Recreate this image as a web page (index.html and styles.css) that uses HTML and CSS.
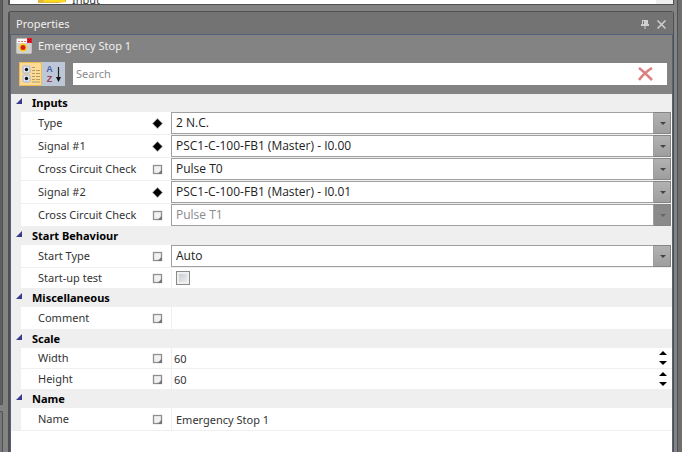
FILE: index.html
```html
<!DOCTYPE html>
<html lang="en">
<head>
    <meta charset="UTF-8">
    <meta name="viewport" content="width=device-width, initial-scale=1.0">
    <title>Properties</title>
    <link rel="stylesheet" href="styles.css">
</head>
<body>
<svg class="defs" width="0" height="0">
    <symbol id="diamond" viewBox="0 0 11 11">
        <path d="M5.500 0L11 5.500L5.500 11L0 5.500Z" fill="#aaa"/>
        <path d="M5.500 1L10 5.500L5.500 10L1 5.500Z" fill="#000"/>
    </symbol>
    <symbol id="box" viewBox="0 0 11 11">
        <rect x="1.500" y="1.500" width="8" height="8" fill="#f1f1f1" stroke="#8f8f8f" stroke-width="1.300"/>
        <path d="M10 5.500V10H5.500Z" fill="#777"/>
    </symbol>
    <symbol id="expander" viewBox="0 0 6 6">
        <path d="M6 0V6H0Z" fill="#3a3a8c"/>
    </symbol>
    <symbol id="up" viewBox="0 0 8 4">
        <path d="M4 0L8 4H0Z" fill="#000"/>
    </symbol>
    <symbol id="down" viewBox="0 0 8 4">
        <path d="M0 0H8L4 4Z" fill="#000"/>
    </symbol>
</svg>

<div class="workspace">
    <div class="side">
        <div class="side-pane"></div>
        <div class="side-pane side-bottom"></div>
    </div>

    <main class="dock">
        <div class="toolbox">
            <svg class="toolbox-icon" width="29" height="4" viewBox="0 0 29 4">
                <path d="M0 0H28V2L20 3H0Z" fill="#e3b63c"/>
                <path d="M6 0H27V2H5Z" fill="#fbdc1c"/>
            </svg>
            <span class="toolbox-text">Input</span>
            <span class="toolbox-scroll"></span>
        </div>

        <section class="panel">
            <header class="panel-title">
                <h1>Properties</h1>
                <button type="button" class="title-btn" aria-label="Auto hide">
                    <svg width="8" height="9" viewBox="0 0 8 9">
                        <path d="M1 0H7V4H8V6H4.500V9H3.500V6H0V4H1Z" fill="#cfcfcf"/>
                        <path d="M2.500 1V4" stroke="#737373"/>
                    </svg>
                </button>
                <button type="button" class="title-btn" aria-label="Close">
                    <svg width="9" height="9" viewBox="0 0 9 9" fill="none" stroke="#d0d0d0" stroke-width="1.500">
                        <path d="M.5 .5L8.500 8.500M8.500 .5L.5 8.500"/>
                    </svg>
                </button>
            </header>

            <div class="panel-head">
                <div class="object">
                    <svg width="16" height="16" viewBox="0 0 16 16">
                        <rect x=".5" y=".5" width="15" height="15" rx="1" fill="#d2d2d2" stroke="#bdbdbd"/>
                        <rect x="1" y="1" width="11" height="4" fill="#fff"/>
                        <path d="M2 3.500H10" stroke="#e77" stroke-dasharray="2 1"/>
                        <rect x="11" y="0" width="5" height="5" fill="#e8192c"/>
                        <path d="M12 1L15 4M15 1L12 4" stroke="#a00"/>
                        <circle cx="7" cy="9.500" r="4" fill="#f5d21f"/>
                        <circle cx="7" cy="9.500" r="2.500" fill="#d91e18"/>
                    </svg>
                    <h2>Emergency Stop 1</h2>
                </div>
                <div class="tools">
                    <div class="sort">
                        <button type="button" class="sort-btn active" aria-label="Categorized">
                            <svg width="18" height="18" viewBox="0 0 18 18">
                                <rect x="1" y="1" width="7" height="7" rx="1" fill="#dfe7f5" stroke="#a9b4c6"/>
                                <rect x="1" y="10" width="7" height="7" rx="1" fill="#dfe7f5" stroke="#a9b4c6"/>
                                <circle cx="4.500" cy="4.500" r="1.700" fill="#111"/>
                                <circle cx="4.500" cy="13.500" r="1.700" fill="#111"/>
                                <path d="M10 2.500H13M10 5.500H13M14 5.500H18M10 8.500H13M14 8.500H18M10 11.500H13M10 14.500H13M14 14.500H18M14 11.500H18M10 17H18" stroke="#b39b66"/>
                            </svg>
                        </button>
                        <button type="button" class="sort-btn" aria-label="Alphabetical">
                            <span class="az"><b class="a">A</b><b class="z">Z</b></span>
                            <svg width="5" height="15" viewBox="0 0 5 15">
                                <path d="M2.500 0V12" stroke="#222" stroke-width="1.200"/>
                                <path d="M0 10H5L2.500 15Z" fill="#111"/>
                            </svg>
                        </button>
                    </div>
                    <div class="search">
                        <input type="text" placeholder="Search" aria-label="Search">
                        <button type="button" class="clear" aria-label="Clear search">
                            <svg width="15" height="14" viewBox="0 0 15 14" fill="none" stroke="#dd8080" stroke-width="2.600">
                                <path d="M1 1C5 4 10 9 14 13M14 1C9 4 4 9 1 13"/>
                            </svg>
                        </button>
                    </div>
                </div>
            </div>

            <form class="grid">
                <fieldset>
                    <legend><button type="button"><svg width="6" height="6"><use href="#expander"/></svg>Inputs</button></legend>
                    <div class="row">
                        <label for="type">Type</label>
                        <svg class="mark" width="11" height="11"><use href="#diamond"/></svg>
                        <div class="value combo"><select id="type"><option>2 N.C.</option></select></div>
                    </div>
                    <div class="row">
                        <label for="signal1">Signal #1</label>
                        <svg class="mark" width="11" height="11"><use href="#diamond"/></svg>
                        <div class="value combo"><select id="signal1"><option>PSC1-C-100-FB1 (Master) - I0.00</option></select></div>
                    </div>
                    <div class="row">
                        <label for="check1">Cross Circuit Check</label>
                        <svg class="mark" width="11" height="11"><use href="#box"/></svg>
                        <div class="value combo"><select id="check1"><option>Pulse T0</option></select></div>
                    </div>
                    <div class="row">
                        <label for="signal2">Signal #2</label>
                        <svg class="mark" width="11" height="11"><use href="#diamond"/></svg>
                        <div class="value combo"><select id="signal2"><option>PSC1-C-100-FB1 (Master) - I0.01</option></select></div>
                    </div>
                    <div class="row">
                        <label for="check2">Cross Circuit Check</label>
                        <svg class="mark" width="11" height="11"><use href="#box"/></svg>
                        <div class="value combo disabled"><select id="check2" disabled><option>Pulse T1</option></select></div>
                    </div>
                </fieldset>

                <fieldset>
                    <legend><button type="button"><svg width="6" height="6"><use href="#expander"/></svg>Start Behaviour</button></legend>
                    <div class="row">
                        <label for="startType">Start Type</label>
                        <svg class="mark" width="11" height="11"><use href="#box"/></svg>
                        <div class="value combo"><select id="startType"><option>Auto</option></select></div>
                    </div>
                    <div class="row short">
                        <label for="startTest">Start-up test</label>
                        <svg class="mark" width="11" height="11"><use href="#box"/></svg>
                        <div class="value"><input type="checkbox" id="startTest"></div>
                    </div>
                </fieldset>

                <fieldset>
                    <legend><button type="button"><svg width="6" height="6"><use href="#expander"/></svg>Miscellaneous</button></legend>
                    <div class="row">
                        <label for="comment">Comment</label>
                        <svg class="mark" width="11" height="11"><use href="#box"/></svg>
                        <div class="value"><input type="text" id="comment"></div>
                    </div>
                </fieldset>

                <fieldset>
                    <legend><button type="button"><svg width="6" height="6"><use href="#expander"/></svg>Scale</button></legend>
                    <div class="row short">
                        <label for="width">Width</label>
                        <svg class="mark" width="11" height="11"><use href="#box"/></svg>
                        <div class="value number">
                            <input type="text" id="width" inputmode="numeric" value="60">
                            <span class="spin">
                                <button type="button" aria-label="Increase width"><svg width="8" height="4"><use href="#up"/></svg></button>
                                <button type="button" aria-label="Decrease width"><svg width="8" height="4"><use href="#down"/></svg></button>
                            </span>
                        </div>
                    </div>
                    <div class="row short">
                        <label for="height">Height</label>
                        <svg class="mark" width="11" height="11"><use href="#box"/></svg>
                        <div class="value number">
                            <input type="text" id="height" inputmode="numeric" value="60">
                            <span class="spin">
                                <button type="button" aria-label="Increase height"><svg width="8" height="4"><use href="#up"/></svg></button>
                                <button type="button" aria-label="Decrease height"><svg width="8" height="4"><use href="#down"/></svg></button>
                            </span>
                        </div>
                    </div>
                </fieldset>

                <fieldset>
                    <legend><button type="button"><svg width="6" height="6"><use href="#expander"/></svg>Name</button></legend>
                    <div class="row">
                        <label for="name">Name</label>
                        <svg class="mark" width="11" height="11"><use href="#box"/></svg>
                        <div class="value"><input type="text" id="name" value="Emergency Stop 1"></div>
                    </div>
                </fieldset>
            </form>
        </section>
    </main>

    <div class="edge"></div>
</div>
</body>
</html>
```
FILE: styles.css
```css
* {
    box-sizing: border-box;
}

body {
    margin: 0;
    background: #838383;
    color: #333;
    font-family: "Noto Sans", "Open Sans", sans-serif;
    font-size: 11px;
    line-height: 16px;
}

h1, h2 {
    margin: 0;
    font-size: 11px;
    font-weight: normal;
}

button, input, select {
    font: inherit;
    color: inherit;
    margin: 0;
    padding: 0;
    border: none;
    border-radius: 0;
    background: none;
    outline: none;
}

svg {
    display: block;
    flex: none;
}

.defs {
    position: absolute;
}

.workspace {
    display: flex;
    min-height: 100vh;
}

/* neighbouring panes */
.side {
    width: 3px;
    display: flex;
    flex-direction: column;
    gap: 6px;
}

.side-pane {
    flex: 1;
    background: #5e5e5e;
    border-right: 1px solid #505050;
    border-bottom: 1px solid #505050;
    border-bottom-right-radius: 2px;
}

.side-bottom {
    flex: none;
    height: 41px;
    background: #777;
    border-top: 1px solid #505050;
    border-bottom: none;
    border-radius: 0 2px 0 0;
}

.edge {
    width: 5px;
    background: #6e6e6e;
    border-left: 1px solid #505050;
}

.dock {
    flex: 1;
    min-width: 0;
    display: flex;
    flex-direction: column;
    gap: 6px;
    padding: 0 3px 0 5px;
}

.toolbox {
    height: 5px;
    display: flex;
    align-items: flex-start;
    gap: 5px;
    padding-left: 28px;
    overflow: hidden;
    background: #fff;
    border: 1px solid #505050;
    border-width: 0 1px 1px 2px;
}

.toolbox-text {
    flex: 1;
    align-self: flex-end;
    line-height: 8px;
}

.toolbox-scroll {
    width: 17px;
    height: 4px;
    background: #efefef;
}

.panel {
    flex: 1;
    display: flex;
    flex-direction: column;
    border: 1px solid #505050;
    border-width: 1px 1px 0 2px;
    border-radius: 3px 3px 0 0;
}

.panel-title {
    display: flex;
    align-items: center;
    height: 23px;
    padding: 2px 7px 0 6px;
    gap: 8px;
    background: #737373;
    border-bottom: 1px solid #53607e;
    color: #f0f0f0;
}

.panel-title h1 {
    flex: 1;
}

.title-btn {
    display: flex;
}

.panel-head {
    padding: 3px 5px 8px 5px;
    border: 1px solid #53607e;
    border-width: 0 1px 0 1px;
    color: #f0f0f0;
}

.object {
    display: flex;
    align-items: center;
    gap: 6px;
}

.tools {
    display: flex;
    align-items: center;
    gap: 8px;
    margin-top: 8px;
    padding-left: 3px;
}

.sort {
    display: flex;
    width: 46px;
    height: 24px;
    background: #bcc7d8;
}

.sort-btn {
    display: flex;
    align-items: center;
    justify-content: center;
    gap: 3px;
    width: 23px;
    height: 24px;
}

.sort-btn.active {
    background: #fddb96;
    border: 1px solid #eebb52;
    border-radius: 2px;
}

.az {
    display: flex;
    flex-direction: column;
    font-family: "Liberation Sans", Arial, sans-serif;
    font-size: 9px;
    line-height: 10px;
}

.a {
    color: #4660a8;
}

.z {
    color: #99404f;
}

.search {
    flex: 1;
    display: flex;
    align-items: center;
    height: 22px;
    padding: 0 14px 0 3px;
    background: #fff;
}

.search input {
    flex: 1;
    min-width: 0;
}

.search input::placeholder {
    color: #8a8a8a;
    opacity: 1;
}

/* property grid */
.grid {
    flex: 1;
    background: #fff;
    border: 1px solid #53607e;
    border-width: 0 1px 0 1px;
}

fieldset {
    margin: 0;
    padding: 0 0 0 10px;
    border: none;
    min-width: 0;
    background: linear-gradient(to right, #efefef 10px, #fff 10px);
}

legend {
    float: left;
    width: calc(100% + 10px);
    height: 18px;
    margin-left: -10px;
    padding: 0 5px;
    background: #efefef;
}

legend button {
    display: flex;
    align-items: center;
    gap: 10px;
    height: 18px;
    color: #000;
    font-weight: bold;
}

legend svg {
    margin-bottom: 4px;
}

.row {
    clear: both;
    display: grid;
    grid-template-columns: 131px 19px 1fr;
    align-items: center;
    height: 23px;
    border-bottom: 1px solid #efefef;
}

.row.short {
    height: 21px;
}

.row label {
    padding-left: 17px;
    white-space: nowrap;
}

.value {
    display: flex;
    align-items: center;
    height: 100%;
    min-width: 0;
    padding-left: 4px;
    border-left: 1px solid #efefef;
}

.value input[type="text"] {
    flex: 1;
    min-width: 0;
    height: 100%;
}

.value input[type="checkbox"] {
    appearance: none;
    width: 14px;
    height: 14px;
    border: 1px solid #8a8a8a;
    background: linear-gradient(135deg, #c0c6cf, #f4f4f4);
    box-shadow: inset 0 0 0 2px #efefef;
}

.combo {
    position: relative;
    margin-right: 1px;
    padding: 0;
    border: 1px solid #a0a0a0;
}

.combo select {
    appearance: none;
    width: 100%;
    height: 100%;
    padding: 0 20px 0 4px;
    color: #222;
    font-family: "Open Sans", "Noto Sans", sans-serif;
    font-size: 12px;
}

.combo::before {
    content: "";
    position: absolute;
    top: -1px;
    right: -1px;
    bottom: -1px;
    width: 16px;
    background: linear-gradient(#b2b2b2, #9e9e9e);
    border: 1px solid #858585;
    border-left-color: #a0a0a0;
    pointer-events: none;
}

.combo::after {
    content: "";
    position: absolute;
    top: 9px;
    right: 4px;
    border: 3px solid transparent;
    border-top-color: #444;
    border-bottom: none;
    pointer-events: none;
}

.combo.disabled select {
    color: #8a8a8a;
    opacity: 1;
}

.combo.disabled::before {
    background: #8a8a8a;
}

.combo.disabled::after {
    border-top-color: #666;
}

.number {
    padding: 0 5px 0 2px;
}

.spin {
    display: flex;
    flex-direction: column;
    gap: 6px;
}

.spin button {
    display: block;
}
```
